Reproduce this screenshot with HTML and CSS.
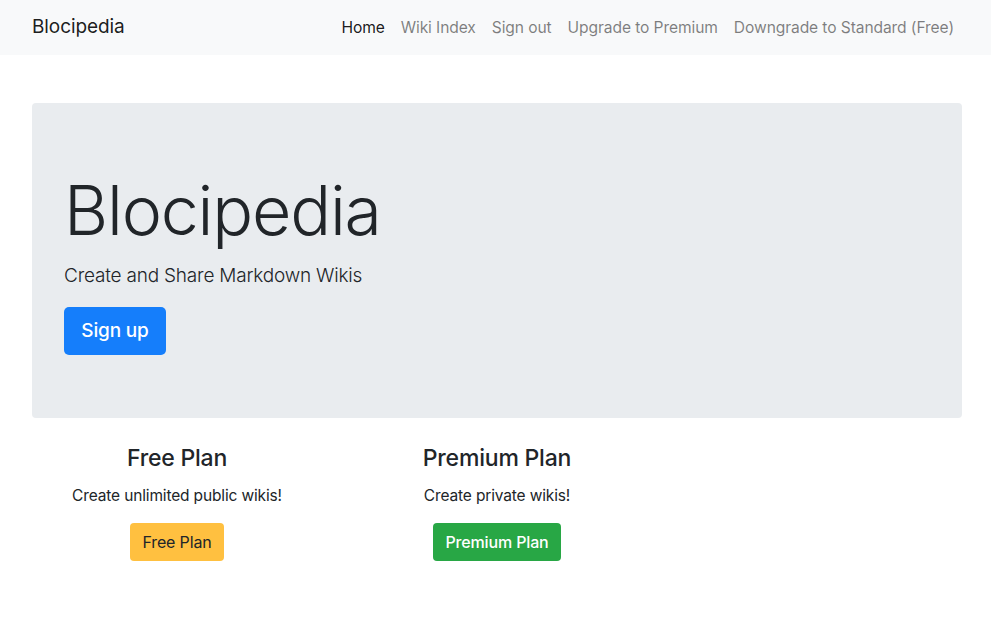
FILE: index.html
```html
<!DOCTYPE html>
<html lang="en">
<head>
<meta charset="utf-8">
<title>Blocipedia</title>
<link rel="stylesheet" href="styles.css">
</head>
<body>
<nav class="navbar">
  <a class="brand" href="#">Blocipedia</a>
  <ul class="nav">
    <li><a class="nav-link active" href="#">Home</a></li>
    <li><a class="nav-link" href="#">Wiki Index</a></li>
    <li><a class="nav-link" href="#">Sign out</a></li>
    <li><a class="nav-link" href="#">Upgrade to Premium</a></li>
    <li><a class="nav-link" href="#">Downgrade to Standard (Free)</a></li>
  </ul>
</nav>
<main class="main">
  <section class="jumbotron">
    <h1 class="display">Blocipedia</h1>
    <p class="lead">Create and Share Markdown Wikis</p>
    <a class="btn btn-primary btn-lg" href="#">Sign up</a>
  </section>
  <section class="plans">
    <div class="plan">
      <h4 class="plan-title">Free Plan</h4>
      <p class="plan-text">Create unlimited public wikis!</p>
      <a class="btn btn-warning" href="#">Free Plan</a>
    </div>
    <div class="plan">
      <h4 class="plan-title">Premium Plan</h4>
      <p class="plan-text">Create private wikis!</p>
      <a class="btn btn-success" href="#">Premium Plan</a>
    </div>
  </section>
</main>
</body>
</html>
```
FILE: styles.css
```css
* { box-sizing: border-box; }
html, body { margin: 0; padding: 0; }
body {
  font-family: Inter, "Noto Sans", "Liberation Sans", sans-serif;
  font-size: 16px;
  line-height: 1.5;
  color: #212529;
  background: #fff;
}
a { text-decoration: none; }

.navbar {
  display: flex;
  align-items: center;
  justify-content: space-between;
  height: 55px;
  padding: 0 29px 0 32px;
  background: #f8f9fa;
}
.brand {
  font-size: 19px;
  color: rgba(0,0,0,.9);
  letter-spacing: -0.1px;
}
.nav {
  display: flex;
  list-style: none;
  margin: 0;
  padding: 0;
}
.nav-link {
  display: block;
  padding: 8px 8px;
  font-size: 15.6px;
  color: rgba(0,0,0,.5);
  letter-spacing: -0.1px;
}
.nav-link.active { color: rgba(0,0,0,.9); }

.main { padding: 48px 29px 0 32px; }

.jumbotron {
  background: #e9ecef;
  border-radius: 4px;
  padding: 64px 32px;
  height: 315px;
}
.display {
  margin: 0 0 8px;
  font-size: 68px;
  font-weight: 300;
  line-height: 86px;
  letter-spacing: -1.2px;
}
.lead {
  margin: 0 0 16px;
  font-size: 19px;
  font-weight: 300;
  line-height: 30px;
  letter-spacing: -0.2px;
}
.btn {
  display: inline-block;
  padding: 6px 12px;
  font-size: 16px;
  line-height: 26px;
  border-radius: 4px;
  font-weight: 400;
  letter-spacing: -0.15px;
}
.btn-lg {
  padding: 8px 16px;
  font-size: 19px;
  line-height: 32px;
  border-radius: 5px;
  font-weight: 500;
  width: 102px;
  text-align: center;
}
.btn-primary { background: #157efb; color: #fff; }
.btn-warning { background: #ffc040; color: #212529; }
.btn-success { background: #28a745; color: #fff; font-weight: 500; }

.plans {
  display: grid;
  grid-template-columns: 320px 320px;
  margin: 26px 0 0 -15px;
}
.plan { text-align: center; }
.plan-title {
  margin: 0 0 11px;
  font-size: 23px;
  font-weight: 500;
  line-height: 29px;
  letter-spacing: -0.2px;
}
.plan-text {
  margin: 0 0 15px;
  font-size: 15.5px;
  line-height: 24px;
  letter-spacing: -0.15px;
}
```
